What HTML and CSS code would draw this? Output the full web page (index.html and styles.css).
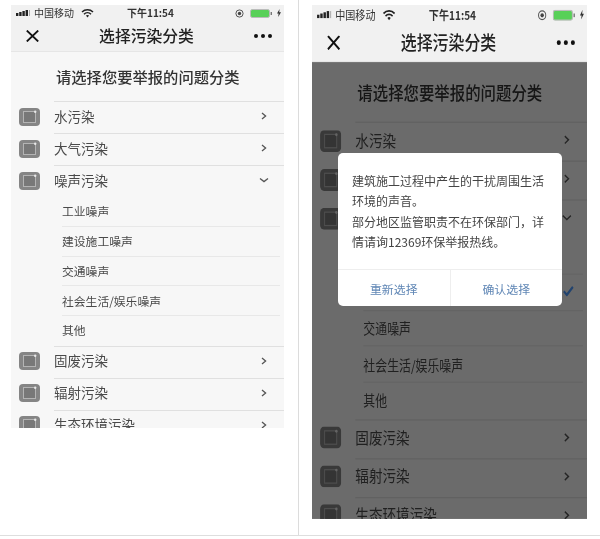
FILE: index.html
```html
<!DOCTYPE html>
<html lang="zh-CN">
<head>
<meta charset="utf-8">
<title>选择污染分类</title>
<link rel="stylesheet" href="styles.css">
</head>
<body>
<svg class="defs" width="0" height="0" aria-hidden="true">
  <symbol id="i-cat" viewBox="0 0 21 18">
    <rect width="21" height="18" rx="4" fill="#858585"/>
    <rect x="4.5" y="3.5" width="12" height="11" fill="#787878" stroke="#b4b4b4" stroke-width="1"/>
    <circle cx="16.2" cy="3.8" r="1.2" fill="#e8e8e8"/>
  </symbol>
  <symbol id="i-right" viewBox="0 0 8 8"><path d="M2 1l3.6 3L2 7" fill="none" stroke="#555" stroke-width="1.3"/></symbol>
  <symbol id="i-down" viewBox="0 0 10 8"><path d="M1 2.4l4 3.2 4-3.2" fill="none" stroke="#555" stroke-width="1.3"/></symbol>
</svg>
<main class="page">
  <section class="pane pane-left">
    <div class="phone">
      <div class="top">
        <div class="status">
          <svg class="sig" width="15" height="6" viewBox="0 0 15 6"><rect x="0" y="3" width="2.4" height="3" fill="#222"/><rect x="3.2" y="2" width="2.4" height="4" fill="#222"/><rect x="6.4" y="1" width="2.4" height="5" fill="#222"/><rect x="9.6" y="0" width="2.4" height="6" fill="#222"/><rect x="13" y="0" width="1" height="6" fill="#aaa"/></svg>
          <span class="carrier">中国移动</span>
          <svg class="wifi" width="13" height="9" viewBox="0 0 13 9"><path d="M1 3a8 8 0 0 1 11 0M3 5.2a5 5 0 0 1 7 0" fill="none" stroke="#222" stroke-width="1.5"/><path d="M4.9 6.6a2.5 2.5 0 0 1 3.2 0L6.5 8.6z" fill="#222"/></svg>
          <span class="time">下午11:54</span>
          <svg class="lock" width="9" height="9" viewBox="0 0 9 9"><circle cx="4.5" cy="4.5" r="3.6" fill="none" stroke="#555" stroke-width="1"/><circle cx="4.5" cy="4.5" r="1.7" fill="#444"/></svg>
          <svg class="batt" width="23" height="9" viewBox="0 0 23 9"><rect x=".5" y=".5" width="19" height="8" rx="1.8" fill="#58d058" stroke="#bbb"/><rect x="20.6" y="3" width="1.4" height="3" fill="#777"/></svg>
          <svg class="bolt" width="4" height="8" viewBox="0 0 4 8"><path d="M2.6 0L0 4.6h1.6L1.2 8 4 3.2H2.2z" fill="#333"/></svg>
        </div>
        <div class="nav">
          <svg class="close" width="13" height="12" viewBox="0 0 13 12"><path d="M.8.5l11.4 11M12.2.5L.8 11.5" fill="none" stroke="#111" stroke-width="1.8"/></svg>
          <span class="nav-title">选择污染分类</span>
          <span class="more"><i></i><i></i><i></i></span>
        </div>
      </div>
      <h2 class="prompt">请选择您要举报的问题分类</h2>
      <ul class="list">
        <li class="row"><svg class="cat"><use href="#i-cat"/></svg><div class="row-main"><span>水污染</span><svg class="arrow"><use href="#i-right"/></svg></div></li>
        <li class="row"><svg class="cat"><use href="#i-cat"/></svg><div class="row-main"><span>大气污染</span><svg class="arrow"><use href="#i-right"/></svg></div></li>
        <li class="row"><svg class="cat"><use href="#i-cat"/></svg><div class="row-main"><span>噪声污染</span><svg class="arrow-down"><use href="#i-down"/></svg></div></li>
        <li class="subs">
          <div class="sub">工业噪声</div>
          <div class="sub">建设施工噪声</div>
          <div class="sub">交通噪声</div>
          <div class="sub">社会生活/娱乐噪声</div>
          <div class="sub">其他</div>
        </li>
        <li class="row"><svg class="cat"><use href="#i-cat"/></svg><div class="row-main"><span>固废污染</span><svg class="arrow"><use href="#i-right"/></svg></div></li>
        <li class="row"><svg class="cat"><use href="#i-cat"/></svg><div class="row-main"><span>辐射污染</span><svg class="arrow"><use href="#i-right"/></svg></div></li>
        <li class="row"><svg class="cat"><use href="#i-cat"/></svg><div class="row-main"><span>生态环境污染</span><svg class="arrow"><use href="#i-right"/></svg></div></li>
      </ul>
    </div>
  </section>

  <section class="pane pane-right">
    <div class="stage">
      <div class="phone phone-tall">
        <div class="top">
          <div class="status">
            <svg class="sig" width="15" height="6" viewBox="0 0 15 6"><rect x="0" y="3" width="2.4" height="3" fill="#222"/><rect x="3.2" y="2" width="2.4" height="4" fill="#222"/><rect x="6.4" y="1" width="2.4" height="5" fill="#222"/><rect x="9.6" y="0" width="2.4" height="6" fill="#222"/><rect x="13" y="0" width="1" height="6" fill="#aaa"/></svg>
            <span class="carrier">中国移动</span>
            <svg class="wifi" width="13" height="9" viewBox="0 0 13 9"><path d="M1 3a8 8 0 0 1 11 0M3 5.2a5 5 0 0 1 7 0" fill="none" stroke="#222" stroke-width="1.5"/><path d="M4.9 6.6a2.5 2.5 0 0 1 3.2 0L6.5 8.6z" fill="#222"/></svg>
            <span class="time">下午11:54</span>
            <svg class="lock" width="9" height="9" viewBox="0 0 9 9"><circle cx="4.5" cy="4.5" r="3.6" fill="none" stroke="#555" stroke-width="1"/><circle cx="4.5" cy="4.5" r="1.7" fill="#444"/></svg>
            <svg class="batt" width="23" height="9" viewBox="0 0 23 9"><rect x=".5" y=".5" width="19" height="8" rx="1.8" fill="#58d058" stroke="#bbb"/><rect x="20.6" y="3" width="1.4" height="3" fill="#777"/></svg>
            <svg class="bolt" width="4" height="8" viewBox="0 0 4 8"><path d="M2.6 0L0 4.6h1.6L1.2 8 4 3.2H2.2z" fill="#333"/></svg>
          </div>
          <div class="nav">
            <svg class="close" width="13" height="12" viewBox="0 0 13 12"><path d="M.8.5l11.4 11M12.2.5L.8 11.5" fill="none" stroke="#111" stroke-width="1.8"/></svg>
            <span class="nav-title">选择污染分类</span>
            <span class="more"><i></i><i></i><i></i></span>
          </div>
        </div>
        <h2 class="prompt">请选择您要举报的问题分类</h2>
        <ul class="list">
          <li class="row"><svg class="cat"><use href="#i-cat"/></svg><div class="row-main"><span>水污染</span><svg class="arrow"><use href="#i-right"/></svg></div></li>
          <li class="row"><svg class="cat"><use href="#i-cat"/></svg><div class="row-main"><span>大气污染</span><svg class="arrow"><use href="#i-right"/></svg></div></li>
          <li class="row"><svg class="cat"><use href="#i-cat"/></svg><div class="row-main"><span>噪声污染</span><svg class="arrow-down"><use href="#i-down"/></svg></div></li>
          <li class="subs">
            <div class="sub">工业噪声</div>
            <div class="sub">建设施工噪声<svg class="check" width="11" height="9" viewBox="0 0 11 9"><path d="M1 4.6l3 3L10 1" fill="none" stroke="#4f9cff" stroke-width="2"/></svg></div>
            <div class="sub">交通噪声</div>
            <div class="sub">社会生活/娱乐噪声</div>
            <div class="sub">其他</div>
          </li>
          <li class="row"><svg class="cat"><use href="#i-cat"/></svg><div class="row-main"><span>固废污染</span><svg class="arrow"><use href="#i-right"/></svg></div></li>
          <li class="row"><svg class="cat"><use href="#i-cat"/></svg><div class="row-main"><span>辐射污染</span><svg class="arrow"><use href="#i-right"/></svg></div></li>
          <li class="row"><svg class="cat"><use href="#i-cat"/></svg><div class="row-main"><span>生态环境污染</span><svg class="arrow"><use href="#i-right"/></svg></div></li>
        </ul>
        <div class="dim"></div>
      </div>
      <div class="dialog">
        <p class="dialog-text">建筑施工过程中产生的干扰周围生活环境的声音。<br>部分地区监管职责不在环保部门，详情请询12369环保举报热线。</p>
        <div class="dialog-actions">
          <span class="dialog-btn">重新选择</span>
          <span class="dialog-btn">确认选择</span>
        </div>
      </div>
    </div>
  </section>
</main>
</body>
</html>
```
FILE: styles.css
```css
* { box-sizing: border-box; }
html, body { margin: 0; padding: 0; background: #fff; }
body { font-family: "Noto Sans CJK SC", "Liberation Sans", sans-serif; color: #333; }
.defs { position: absolute; }

.page {
  display: flex;
  width: 600px;
  height: 536px;
  border-bottom: 1px solid #dedede;
}
.pane { padding-top: 5px; }
.pane-left { width: 299px; padding-left: 11px; border-right: 1px solid #dcdcdc; }
.pane-right { flex: 1; padding-left: 13px; }

.phone {
  position: relative;
  width: 273px;
  height: 423px;
  overflow: hidden;
  background: #f7f7f7;
  filter: blur(.45px);
}
.stage { position: relative; width: 275px; height: 514px; overflow: hidden; }
.phone-tall { transform: scale(1.0073, 1.215); transform-origin: 0 0; }

.top { height: 47px; background: #f1f1f1; border-bottom: 1px solid #e6e6e6; }
.status {
  display: flex;
  align-items: center;
  height: 16px;
  padding-left: 5px;
  font-size: 10px;
  color: #333;
}
.sig { flex: none; margin-right: 3px; }
.carrier { width: 42px; line-height: 16px; white-space: nowrap; }
.wifi { flex: none; margin-left: 5px; }
.time { width: 47px; margin-left: 33px; font-weight: 700; line-height: 16px; white-space: nowrap; }
.lock { flex: none; margin-left: 61px; }
.batt { flex: none; margin-left: 6px; }
.bolt { flex: none; margin-left: 4px; }

.nav {
  display: flex;
  align-items: center;
  justify-content: space-between;
  height: 30px;
  padding: 0 12px 0 15px;
}
.close { flex: none; }
.nav-title { font-size: 15.8px; font-weight: 500; color: #222; line-height: 20px; }
.more { display: flex; gap: 3px; }
.more i { width: 4px; height: 4px; border-radius: 50%; background: #111; }

.prompt {
  height: 49px;
  margin: 0;
  padding-left: 45px;
  font-size: 15.3px;
  font-weight: 500;
  line-height: 49px;
  color: #333;
  white-space: nowrap;
}

.list { margin: 0; padding: 0; list-style: none; }
.row {
  display: flex;
  align-items: center;
  height: 32px;
  padding-left: 8px;
}
.cat { flex: none; width: 21px; height: 18px; margin: -1px 14px 0 0; }
.row-main {
  flex: 1;
  display: flex;
  align-items: center;
  justify-content: space-between;
  height: 32px;
  padding-right: 16px;
  border-top: 1px solid #e0e0e0;
  font-size: 13.5px;
  color: #4a4a4a;
  white-space: nowrap;
}
.row-main span { line-height: 26px; margin-top: -4px; }
.arrow { flex: none; width: 8px; height: 8px; margin-top: -3px; }
.arrow-down { flex: none; width: 10px; height: 8px; margin: -3px -1px 0 0; }

.subs { padding-left: 51px; padding-right: 4px; }
.sub {
  display: flex;
  align-items: center;
  justify-content: space-between;
  height: 29.8px;
  padding-bottom: 1px;
  border-bottom: 1px solid #e8e8e8;
  font-size: 11.8px;
  color: #4a4a4a;
  white-space: nowrap;
}
.sub:last-child { border-bottom: 0; padding-bottom: 3px; }
.check { flex: none; margin-right: 9px; }

.dim { position: absolute; left: 0; right: 0; top: 47px; bottom: 0; background: rgba(0, 0, 0, .57); }

.dialog {
  position: absolute;
  left: 26px;
  top: 148px;
  display: flex;
  flex-direction: column;
  width: 224px;
  height: 153px;
  border-radius: 5px;
  background: #fff;
  filter: blur(.35px);
}
.dialog-text {
  flex: 1;
  margin: 0;
  padding: 18px 14px 0;
  font-size: 12px;
  line-height: 20.4px;
  color: #444;
}
.dialog-actions { display: flex; height: 37px; border-top: 1px solid #eee; }
.dialog-btn {
  flex: 1;
  font-size: 11.9px;
  line-height: 37px;
  text-align: center;
  color: #5f86b5;
}
.dialog-btn + .dialog-btn { border-left: 1px solid #eee; }
```
